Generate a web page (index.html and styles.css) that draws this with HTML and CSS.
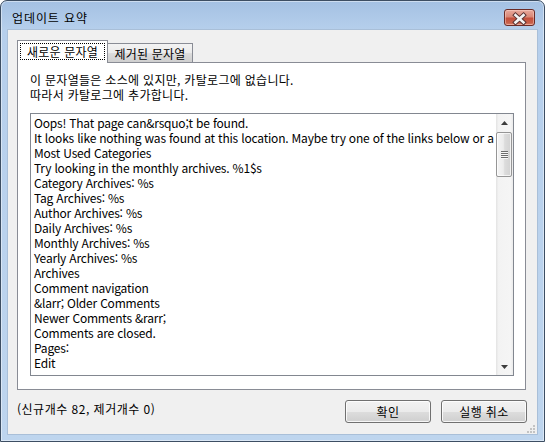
FILE: index.html
```html
<!DOCTYPE html>
<html lang="ko">
<head>
<meta charset="utf-8">
<title>업데이트 요약</title>
<link rel="stylesheet" href="styles.css">
</head>
<body>
<div class="window">
  <div class="titlebar">
    <span class="title">업데이트 요약</span>
    <span class="close">
      <svg width="31" height="17" viewBox="0 0 31 17">
        <path d="M11.5 6.2 L19.5 13.4 M19.5 6.2 L11.5 13.4" stroke="#5a3434" stroke-width="4.6" stroke-linecap="square" fill="none"/>
        <path d="M11.5 6.2 L19.5 13.4 M19.5 6.2 L11.5 13.4" stroke="#f4f4f4" stroke-width="2.6" stroke-linecap="square" fill="none"/>
      </svg>
    </span>
  </div>
  <div class="client">
    <div class="tabs">
      <div class="tab active"><span class="focus">새로운 문자열</span></div>
      <div class="tab">제거된 문자열</div>
    </div>
    <div class="panel">
      <p class="info">이 문자열들은 소스에 있지만, 카탈로그에 없습니다.<br>따라서 카탈로그에 추가합니다.</p>
      <div class="listbox">
        <div class="list">Oops! That page can&amp;rsquo;t be found.
It looks like nothing was found at this location. Maybe try one of the links below or a search?
Most Used Categories
Try looking in the monthly archives. %1$s
Category Archives: %s
Tag Archives: %s
Author Archives: %s
Daily Archives: %s
Monthly Archives: %s
Yearly Archives: %s
Archives
Comment navigation
&amp;larr; Older Comments
Newer Comments &amp;rarr;
Comments are closed.
Pages:
Edit</div>
        <div class="scrollbar">
          <div class="sb-btn">
            <svg width="7" height="4" viewBox="0 0 7 4"><polygon points="0,4 7,4 3.5,0" fill="#3c3c3c"/></svg>
          </div>
          <div class="sb-track">
            <div class="thumb">
              <span class="grip"></span><span class="grip"></span><span class="grip"></span><span class="grip"></span>
            </div>
          </div>
          <div class="sb-btn">
            <svg width="7" height="4" viewBox="0 0 7 4"><polygon points="0,0 7,0 3.5,4" fill="#3c3c3c"/></svg>
          </div>
        </div>
      </div>
    </div>
    <div class="footer">
      <span class="status">(신규개수 82, 제거개수 0)</span>
      <div class="buttons">
        <button class="btn">확인</button>
        <button class="btn">실행 취소</button>
      </div>
    </div>
    <svg class="grip-corner" width="11" height="11" viewBox="0 0 11 11">
      <rect x="8" y="2" width="2" height="2" fill="#c3c3c3"/>
      <rect x="5" y="5" width="2" height="2" fill="#c3c3c3"/>
      <rect x="8" y="5" width="2" height="2" fill="#c3c3c3"/>
      <rect x="2" y="8" width="2" height="2" fill="#c3c3c3"/>
      <rect x="5" y="8" width="2" height="2" fill="#c3c3c3"/>
      <rect x="8" y="8" width="2" height="2" fill="#c3c3c3"/>
    </svg>
  </div>
</div>
</body>
</html>
```
FILE: styles.css
```css
html, body {
  margin: 0;
  padding: 0;
  background: #ffffff;
}
body {
  font-family: "Noto Sans CJK KR", "Noto Sans", sans-serif;
  font-size: 12px;
  color: #000;
}
.window {
  width: 545px;
  height: 442px;
  box-sizing: border-box;
  border: 1px solid #3d4e63;
  border-radius: 7px 7px 0 0;
  background: linear-gradient(180deg, #a4c1e3 0px, #b6cfec 29px, #bed5ee 100%);
  box-shadow: inset 0 0 0 1px rgba(255, 255, 255, 0.45);
  display: flex;
  flex-direction: column;
  overflow: hidden;
}
.titlebar {
  height: 29px;
  flex: none;
  display: flex;
  justify-content: space-between;
  align-items: flex-start;
  padding: 0 9px 0 11px;
}
.title {
  padding-top: 10px;
  line-height: 14px;
  font-size: 12px;
  letter-spacing: 0.9px;
}
.close {
  margin-top: 8px;
  width: 31px;
  height: 17px;
  box-sizing: border-box;
  border: 1px solid #6b2b26;
  border-radius: 3px;
  background: linear-gradient(180deg, #e9a99c 0%, #d98877 45%, #c4503d 55%, #c8604a 85%, #d9826b 100%);
  box-shadow: inset 0 0 0 1px rgba(255, 220, 210, 0.45);
  display: flex;
  align-items: center;
  justify-content: center;
  overflow: hidden;
}
.close svg {
  display: block;
  margin: -1px;
}
.client {
  flex: 1;
  margin: 0 7px 7px;
  background: #f0f0f0;
  display: flex;
  flex-direction: column;
  position: relative;
  box-shadow: 0 0 0 1px #a9bfd8;
}
.tabs {
  display: flex;
  align-items: flex-end;
  padding: 10px 0 0 9px;
  height: 22px;
  position: relative;
  z-index: 2;
}
.tab {
  box-sizing: border-box;
  height: 19px;
  width: 86px;
  margin-left: -1px;
  border: 1px solid #898c95;
  border-bottom: none;
  background: linear-gradient(180deg, #f3f3f3 0%, #ebebeb 50%, #dddddd 51%, #cfcfcf 100%);
  display: flex;
  align-items: center;
  justify-content: center;
  line-height: 15px;
  padding: 1px 0 0 0;
  letter-spacing: 0.2px;
}
.tab.active {
  margin-left: 0;
  width: 91px;
  height: 23px;
  margin-bottom: -1px;
  background: #ffffff;
  position: relative;
  z-index: 2;
  padding: 2px 2px 3px;
}
.focus {
  display: block;
  width: 100%;
  height: 100%;
  box-sizing: border-box;
  outline: 1px dotted #000;
  outline-offset: -1px;
  text-align: center;
  line-height: 17px;
}
.panel {
  box-sizing: border-box;
  margin: 0 11px 0 9px;
  height: 328px;
  border: 1px solid #898c95;
  background: #ffffff;
  padding: 9px 11px 13px 12px;
  display: flex;
  flex-direction: column;
}
.info {
  margin: 0;
  line-height: 15px;
  letter-spacing: 0.3px;
}
.listbox {
  margin-top: 11px;
  flex: 1;
  box-sizing: border-box;
  border: 1px solid #828790;
  display: flex;
  overflow: hidden;
}
.list {
  flex: 1;
  min-width: 0;
  overflow: hidden;
  white-space: pre;
  line-height: 15px;
  padding: 1px 0 0 3px;
  letter-spacing: -0.2px;
}
.scrollbar {
  width: 17px;
  flex: none;
  display: flex;
  flex-direction: column;
  background: linear-gradient(90deg, #e3e3e3 0%, #f3f3f3 15%, #f5f5f5 85%, #ebebeb 100%);
}
.sb-btn {
  height: 17px;
  flex: none;
  display: flex;
  align-items: center;
  justify-content: center;
}
.sb-track {
  flex: 1;
  padding: 1px 1px 0 0;
}
.thumb {
  box-sizing: border-box;
  height: 45px;
  width: 16px;
  border: 1px solid #969696;
  border-radius: 2px;
  background: linear-gradient(90deg, #f5f5f5 0%, #ececec 45%, #dcdcdc 55%, #d2d2d2 100%);
  box-shadow: inset 0 0 0 1px rgba(255, 255, 255, 0.7);
  display: flex;
  flex-direction: column;
  align-items: center;
  justify-content: center;
  gap: 1px;
}
.grip {
  display: block;
  width: 7px;
  height: 1px;
  background: #6e6e6e;
  box-shadow: 0 1px 0 #f8f8f8;
}
.footer {
  flex: 1;
  display: flex;
  align-items: flex-start;
  justify-content: space-between;
  padding: 10px 10px 0 9px;
}
.status {
  line-height: 15px;
  padding-top: 1px;
  letter-spacing: 0.5px;
}
.buttons {
  display: flex;
  gap: 10px;
}
.btn {
  width: 86px;
  height: 23px;
  box-sizing: border-box;
  border: 1px solid #707070;
  border-radius: 3px;
  background: linear-gradient(180deg, #f2f2f2 0%, #ebebeb 50%, #dddddd 51%, #cfcfcf 100%);
  box-shadow: inset 0 0 0 1px rgba(255, 255, 255, 0.8);
  font-family: "Noto Sans CJK KR", "Noto Sans", sans-serif;
  font-size: 12px;
  letter-spacing: 0.4px;
  color: #000;
  padding: 0;
  line-height: 15px;
}
.grip-corner {
  position: absolute;
  right: 1px;
  bottom: 0px;
}
```
